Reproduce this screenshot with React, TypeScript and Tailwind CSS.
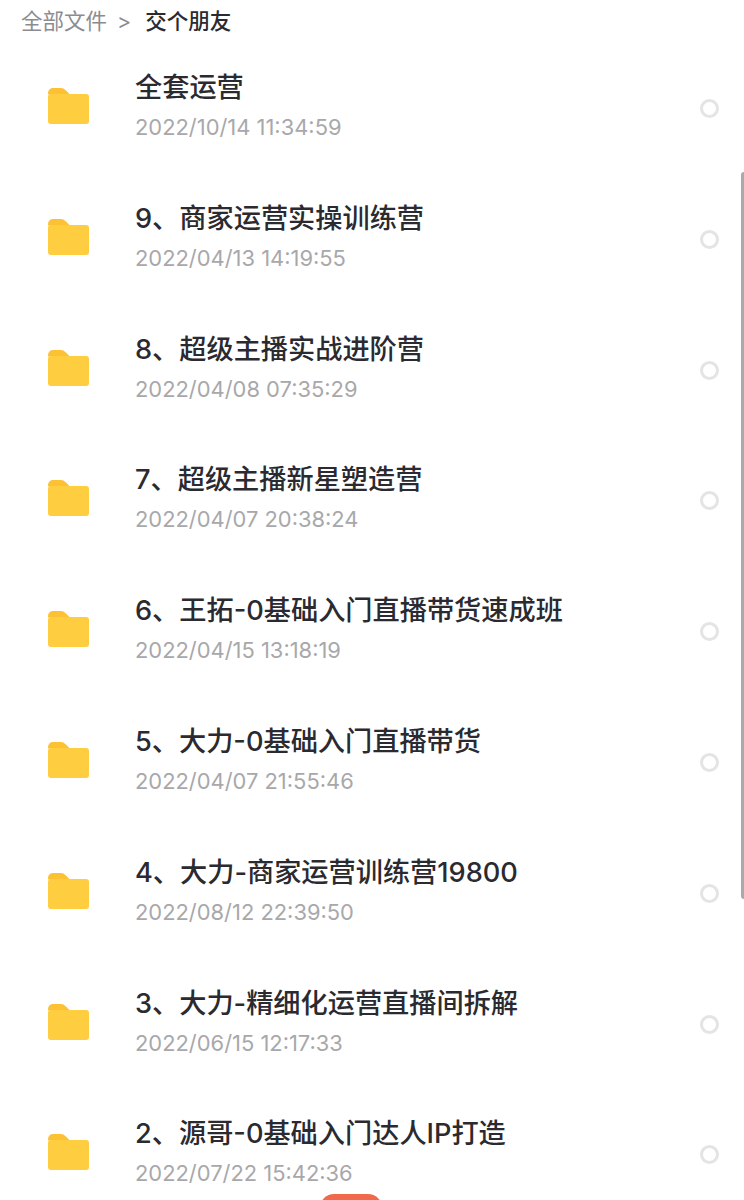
const FONT_STACK = "font-['Inter','Noto_Sans_CJK_SC',sans-serif]";

const files = [
  { name: "全套运营", time: "2022/10/14 11:34:59" },
  { name: "9、商家运营实操训练营", time: "2022/04/13 14:19:55" },
  { name: "8、超级主播实战进阶营", time: "2022/04/08 07:35:29" },
  { name: "7、超级主播新星塑造营", time: "2022/04/07 20:38:24" },
  { name: "6、王拓-0基础入门直播带货速成班", time: "2022/04/15 13:18:19" },
  { name: "5、大力-0基础入门直播带货", time: "2022/04/07 21:55:46" },
  { name: "4、大力-商家运营训练营19800", time: "2022/08/12 22:39:50" },
  { name: "3、大力-精细化运营直播间拆解", time: "2022/06/15 12:17:33" },
  { name: "2、源哥-0基础入门达人IP打造", time: "2022/07/22 15:42:36" },
];

function FolderIcon() {
  return (
    <svg width="41" height="36" viewBox="0 0 41 36" className="shrink-0">
      <path d="M0 5a5 5 0 0 1 5-5h8c2 0 3 .7 4.400 2l4.600 4.500H0z" fill="#fdc233" />
      <rect x="0" y="6" width="41" height="30" rx="3" fill="#ffcd40" />
    </svg>
  );
}

function FileRow({ name, time }: { name: string; time: string }) {
  return (
    <div className="flex h-[130.8px] items-start">
      <div className="ml-[48px] mt-[20px] w-[87px]">
        <FolderIcon />
      </div>
      <div className="flex-1">
        <div className="text-[27.200px] leading-[40px] font-medium text-[#2a2a30]">{name}</div>
        <div className="text-[21.900px] leading-[38px] text-[#a8a8ab]">{time}</div>
      </div>
      <span className="mr-[25px] mt-[31px] h-[19px] w-[19px] rounded-full border-[3px] border-[#e4e4e4]" />
    </div>
  );
}

export default function App() {
  return (
    <div className={`relative h-[1200px] w-[744px] overflow-hidden bg-white ${FONT_STACK}`}>
      <div className="flex h-[43px] items-center pl-[21px] text-[21.500px]">
        <span className="text-[#8c8c90]">全部文件</span>
        <span className="ml-[10px] text-[#8c8c90]">&gt;</span>
        <span className="ml-[14px] font-medium text-[#2a2a30]">交个朋友</span>
      </div>
      <div className="pt-[25px]">
        {files.map((file) => (
          <FileRow key={file.name} name={file.name} time={file.time} />
        ))}
      </div>
      {/* scrollbar thumb */}
      <div className="absolute right-0 top-[172px] h-[727px] w-[3px] rounded-l-full bg-[#a9a9a9]" />
      {/* floating action button, cut off by the bottom edge */}
      <div className="absolute bottom-[-24px] left-[320px] h-[30px] w-[62px] rounded-t-[14px] bg-[#f0694a]" />
    </div>
  );
}
